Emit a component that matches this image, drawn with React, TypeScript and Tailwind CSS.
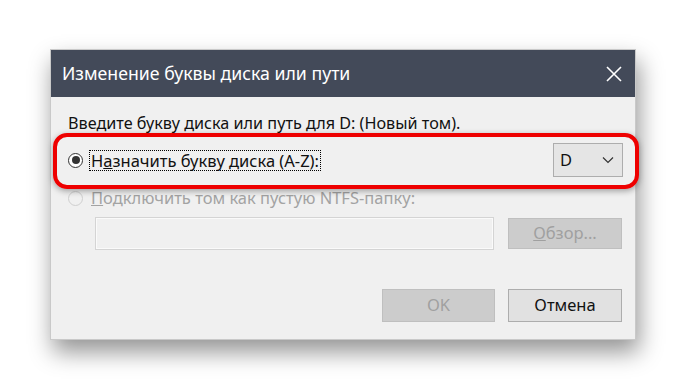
import React from 'react';

function Radio({ checked, disabled }: { checked?: boolean; disabled?: boolean }) {
  return (
    <span
      className={`flex h-[15px] w-[15px] shrink-0 items-center justify-center rounded-full border ${
        disabled ? 'border-[#cfcfcf] bg-[#f0f0f0]' : 'border-[#333333] bg-white'
      }`}
    >
      {checked && <span className="h-[8px] w-[8px] rounded-full bg-[#333333]" />}
    </span>
  );
}

export default function App() {
  return (
    <div
      className="h-[391px] w-[686px] overflow-hidden bg-white pl-[50px] pt-[49px]"
      style={{ fontFamily: '"Noto Sans", "Open Sans", sans-serif' }}
    >
      <div className="relative flex h-[291px] w-[586px] flex-col border border-[#c9c9c9] bg-[#f0f0f0] shadow-[3px_12px_22px_rgba(0,0,0,0.42)]">
        {/* title bar */}
        <div className="flex h-[47px] shrink-0 items-center justify-between bg-[#434a59] pl-[11px] pr-[13px]">
          <span className="text-[17.7px] text-white">Изменение буквы диска или пути</span>
          <svg width="16" height="16" viewBox="0 0 16 16" className="text-white">
            <path d="M1 1 L15 15 M15 1 L1 15" stroke="currentColor" strokeWidth="1.6" fill="none" />
          </svg>
        </div>

        <div className="flex flex-col pl-[17px] pr-[12px] text-[16.5px] text-[#111]">
          <div className="mt-[16px] h-[21px] leading-[21px] text-[16.2px]">
            Введите букву диска или путь для D: (Новый том).
          </div>

          <div className="mt-[9px] flex h-[34px] items-center justify-between">
            <div className="flex items-center">
              <Radio checked />
              <span className="ml-[6px] border border-dotted border-black px-[1px] leading-[19px]">
                Н<span className="underline">а</span>значить букву диска (A-Z):
              </span>
            </div>
            <div className="flex h-[34px] w-[70px] items-center justify-between border border-[#adadad] bg-[#e5e5e5] pl-[6px] pr-[8px]">
              <span>D</span>
              <svg width="12" height="8" viewBox="0 0 12 8">
                <path d="M1 1.5 L6 6.5 L11 1.5" stroke="#333" strokeWidth="1.2" fill="none" />
              </svg>
            </div>
          </div>

          <div className="mt-[11px] flex h-[20px] items-center text-[#a3a3a3]">
            <Radio disabled />
            <span className="ml-[8px] leading-[20px]">
              <span className="underline">П</span>одключить том как пустую NTFS-папку:
            </span>
          </div>

          <div className="mt-[9px] flex h-[33px] items-center pl-[27px]">
            <div className="h-[33px] w-[399px] border border-[#d4d4d4] bg-[#f0f0f0] shadow-[inset_0_0_0_1px_#fafafa]" />
            <div className="ml-[14px] flex h-[31px] w-[114px] items-center justify-center border border-[#bfbfbf] bg-[#cccccc] text-[#a0a0a0]">
              <span className="underline">О</span>бзор...
            </div>
          </div>

          <div className="mt-[39px] flex h-[33px] justify-end gap-[13px] pr-[1px]">
            <div className="flex h-[33px] w-[113px] items-center justify-center border border-[#bfbfbf] bg-[#cccccc] text-[#a0a0a0]">
              OK
            </div>
            <div className="flex h-[33px] w-[114px] items-center justify-center border border-[#adadad] bg-[#e1e1e1]">
              Отмена
            </div>
          </div>
        </div>

        {/* red annotation frame */}
        <div className="absolute left-[2px] top-[83px] h-[56px] w-[586px] rounded-[14px] border-[4px] border-[#ee0000] shadow-[0_2px_6px_rgba(0,0,0,0.35)]" />
      </div>
    </div>
  );
}
